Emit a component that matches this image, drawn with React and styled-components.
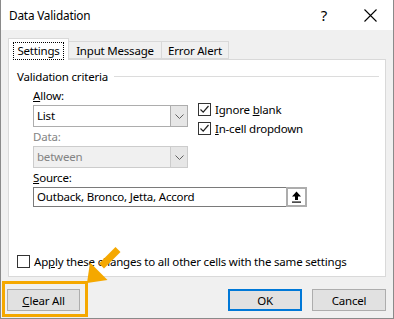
import React from 'react';
import styled, { createGlobalStyle } from 'styled-components';

const GlobalStyle = createGlobalStyle`
  html, body { margin:0; padding:0; background:#fff; }
  body {
    font-family:"Noto Sans", "Open Sans", sans-serif;
    font-size:11.5px;
    letter-spacing:-0.2px;
    color:#000;
  }
  * { box-sizing:border-box; }
`;

const ORANGE = '#f5a800';

const Window = styled.div`
  position:relative;
  width:394px;
  height:319px;
  display:flex;
  flex-direction:column;
  border:1px solid #8a8a8a;
  border-top:none;
  background:#f0f0f0;
`;

const TitleBar = styled.div`
  height:30px;
  background:#fff;
  display:flex;
  align-items:center;
  padding:0 0 0 8px;
  font-size:11.8px;
`;

const Title = styled.div`
  flex:1;
`;

const TitleButton = styled.div`
  width:${p => p.w}px;
  display:flex;
  justify-content:center;
  align-items:center;
  font-size:15px;
`;

const Body = styled.div`
  flex:1;
  padding:8px 7px 0 7px;
  display:flex;
  flex-direction:column;
`;

const Tabs = styled.div`
  display:flex;
  align-items:flex-end;
  height:21px;
  position:relative;
  z-index:1;
`;

const Tab = styled.div`
  height:${p => (p.active ? 22 : 18)}px;
  margin-bottom:${p => (p.active ? -1 : 0)}px;
  width:${p => p.w}px;
  border:1px solid #d9d9d9;
  border-bottom:${p => (p.active ? 'none' : '1px solid #d9d9d9')};
  border-left:${p => (p.first ? '1px solid #d9d9d9' : 'none')};
  background:${p => (p.active ? '#fff' : '#f0f0f0')};
  display:flex;
  align-items:center;
  justify-content:center;
  padding-top:${p => (p.active ? 2 : 0)}px;
`;

const Focus = styled.span`
  outline:1px dotted #000;
  padding:0 3px 1px;
  line-height:15px;
`;

const Panel = styled.div`
  height:218px;
  background:#fff;
  border:1px solid #d9d9d9;
  display:flex;
  flex-direction:column;
  padding:8px 0 7px 7px;
`;

const GroupHeader = styled.div`
  display:flex;
  align-items:center;
  height:16px;
  gap:6px;
  padding-left:1px;
  &::after {
    content:'';
    flex:1;
    height:1px;
    background:#dcdcdc;
    margin-right:6px;
  }
`;

const Group = styled.div`
  padding-left:17px;
`;

const Columns = styled.div`
  display:grid;
  grid-template-columns:155px auto;
  column-gap:10px;
`;

const Field = styled.div`
  display:flex;
  flex-direction:column;
`;

const Label = styled.div`
  height:16px;
  line-height:16px;
  margin-top:${p => p.mt || 0}px;
  margin-bottom:1px;
  color:${p => (p.disabled ? '#838383' : '#000')};
`;

const Select = styled.div`
  height:22px;
  display:flex;
  border:1px solid ${p => (p.disabled ? '#cccccc' : '#adadad')};
  background:${p => (p.disabled ? '#f0f0f0' : '#fff')};
  color:${p => (p.disabled ? '#838383' : '#000')};
`;

const SelectValue = styled.div`
  flex:1;
  padding-left:3px;
  line-height:20px;
`;

const DropButton = styled.div`
  width:17px;
  background:#e6e6e6;
  border-left:1px solid ${p => (p.disabled ? '#cccccc' : '#adadad')};
  display:flex;
  align-items:center;
  justify-content:center;
`;

const Checks = styled.div`
  padding-top:17px;
  display:flex;
  flex-direction:column;
  gap:3px;
`;

const CheckRow = styled.div`
  display:flex;
  align-items:center;
  height:16px;
  gap:4px;
`;

const Box = styled.div`
  width:13px;
  height:13px;
  border:1px solid #333;
  background:#fff;
  display:flex;
  align-items:center;
  justify-content:center;
`;

const TextBox = styled.div`
  width:274px;
  height:20px;
  display:flex;
  border:1px solid #7a7a7a;
  border-right:none;
  background:#fff;
`;

const TextValue = styled.div`
  flex:1;
  padding-left:3px;
  line-height:18px;
`;

const PickButton = styled.div`
  width:21px;
  height:20px;
  margin-top:-1px;
  border:2px solid #adadad;
  background:#fff;
  display:flex;
  align-items:center;
  justify-content:center;
`;

const ApplyRow = styled(CheckRow)`
  margin-top:auto;
  padding-left:1px;
`;

const Footer = styled.div`
  display:flex;
  margin-top:12px;
  gap:10px;
`;

const Button = styled.div`
  width:${p => p.w || 74}px;
  height:22px;
  display:flex;
  align-items:center;
  justify-content:center;
  background:#e1e1e1;
  border:${p => (p.primary ? '2px solid #0078d7' : '1px solid #adadad')};
  margin-left:${p => p.ml || 0}px;
`;

const Spacer = styled.div`
  flex:1;
`;

const Highlight = styled.div`
  position:absolute;
  left:1px;
  top:281px;
  width:86px;
  height:36px;
  border:3px solid ${ORANGE};
  pointer-events:none;
`;

const Pointer = styled.svg`
  position:absolute;
  left:80px;
  top:244px;
`;

const Chevron = () => (
  <svg width="9" height="5" viewBox="0 0 9 5">
    <path d="M0.5 0.5 L4.5 4.5 L8.5 0.5" fill="none" stroke="#606060" strokeWidth="1" />
  </svg>
);

const Tick = () => (
  <svg width="11" height="11" viewBox="0 0 11 11">
    <path d="M1.5 5.5 L4.2 8.2 L9.5 2" fill="none" stroke="#222" strokeWidth="1.2" />
  </svg>
);

export default function App() {
  return (
    <>
      <GlobalStyle />
      <Window>
        <TitleBar>
          <Title>Data Validation</Title>
          <TitleButton w={46}>?</TitleButton>
          <TitleButton w={46}>
            <svg width="13" height="13" viewBox="0 0 13 13">
              <path d="M0.5 0.5 L12.5 12.5 M12.5 0.5 L0.5 12.5" stroke="#000" strokeWidth="1.1" />
            </svg>
          </TitleButton>
        </TitleBar>
        <Body>
          <Tabs>
            <Tab active first w={61}><Focus>Settings</Focus></Tab>
            <Tab w={93}>Input Message</Tab>
            <Tab w={67}>Error Alert</Tab>
          </Tabs>
          <Panel>
            <GroupHeader>
              <span>Validation criteria</span>
            </GroupHeader>
            <Group>
              <Columns>
                <Field>
                  <Label mt={4}><u>A</u>llow:</Label>
                  <Select>
                    <SelectValue>List</SelectValue>
                    <DropButton><Chevron /></DropButton>
                  </Select>
                  <Label mt={2} disabled>Data:</Label>
                  <Select disabled>
                    <SelectValue>between</SelectValue>
                    <DropButton disabled><Chevron /></DropButton>
                  </Select>
                </Field>
                <Checks>
                  <CheckRow>
                    <Box><Tick /></Box>
                    <span>Ignore <u>b</u>lank</span>
                  </CheckRow>
                  <CheckRow>
                    <Box><Tick /></Box>
                    <span><u>I</u>n-cell dropdown</span>
                  </CheckRow>
                </Checks>
              </Columns>
              <Label mt={2}><u>S</u>ource:</Label>
              <TextBox>
                <TextValue>Outback, Bronco, Jetta, Accord</TextValue>
                <PickButton>
                  <svg width="11" height="12" viewBox="0 0 11 12">
                    <path d="M5.5 0.5 L10 5.5 L7 5.5 L7 9 L4 9 L4 5.5 L1 5.5 Z" fill="#000" />
                    <rect x="1" y="10.5" width="9" height="1.2" fill="#000" />
                  </svg>
                </PickButton>
              </TextBox>
            </Group>
            <ApplyRow>
              <Box />
              <span>Ap<u>p</u>ly these changes to all other cells with the same settings</span>
            </ApplyRow>
          </Panel>
          <Footer>
            <Button w={73} ml={-1}><span><u>C</u>lear All</span></Button>
            <Spacer />
            <Button primary>OK</Button>
            <Button>Cancel</Button>
          </Footer>
        </Body>
        <Highlight />
        <Pointer width="42" height="44" viewBox="80 244 42 44">
          <path d="M117 249.5 L100.5 266" stroke={ORANGE} strokeWidth="7" strokeLinecap="butt" />
          <path d="M86 283 L89 262.5 L106.5 280 Z" fill={ORANGE} />
        </Pointer>
      </Window>
    </>
  );
}
